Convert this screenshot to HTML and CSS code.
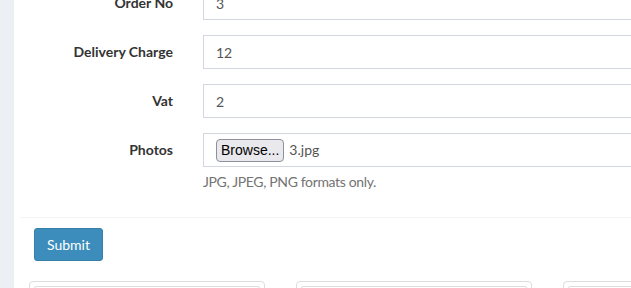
FILE: index.html
```
<!DOCTYPE html>
<html lang="en">
<head>
    <meta charset="UTF-8">
    <title>Edit Order</title>
    <link rel="stylesheet" href="styles.css">
</head>
<body>
    <div class="box">
        <form class="form-horizontal">
            <div class="box-body">
                <div class="form-group first">
                    <label class="control-label">Order No</label>
                    <input type="text" class="form-control" value="3">
                </div>
                <div class="form-group">
                    <label class="control-label">Delivery Charge</label>
                    <input type="text" class="form-control" value="12">
                </div>
                <div class="form-group">
                    <label class="control-label">Vat</label>
                    <input type="text" class="form-control" value="2">
                </div>
                <div class="form-group">
                    <label class="control-label">Photos</label>
                    <div class="field">
                        <div class="form-control file-control">
                            <span class="browse">Browse...</span>
                            <span class="file-name">3.jpg</span>
                        </div>
                        <p class="help-block">JPG, JPEG, PNG formats only.</p>
                    </div>
                </div>
            </div>

            <!-- footer -->
            <div class="box-footer">
                <button type="button" class="btn-primary">Submit</button>
            </div>
        </form>

        <div class="thumbs">
            <div class="thumbnail"><div class="thumb-inner"></div></div>
            <div class="thumbnail"><div class="thumb-inner"></div></div>
            <div class="thumbnail"><div class="thumb-inner"></div></div>
        </div>
    </div>
</body>
</html>
```

FILE: styles.css
```
body {
    margin: 0;
    padding: 0;
    background-color: #ecf0f5;
    color: #333;
    font-family: Lato, "Open Sans", sans-serif;
    font-size: 14px;
    line-height: 20px;
    overflow: hidden;
    height: 288px;
}
.box {
    margin-left: 14px;
    width: 700px;
    height: 320px;
    background-color: #fff;
}
.box-body {
    padding: 0 10px 10px 10px;
}
.form-group {
    display: flex;
    gap: 30px;
    margin-bottom: 15px;
}
.form-group.first {
    margin-top: -14px;
}
.control-label {
    width: 149px;
    flex-shrink: 0;
    text-align: right;
    font-weight: bold;
    padding-top: 7px;
}
.form-control {
    flex: 1;
    box-sizing: border-box;
    height: 34px;
    padding: 6px 12px;
    border: 1px solid #d2d6de;
    border-radius: 0;
    font-family: inherit;
    font-size: 14px;
    color: #555;
    background-color: #fff;
    outline: none;
}
.field {
    flex: 1;
}
.file-control {
    display: flex;
    align-items: center;
    gap: 5px;
    padding: 0 12px;
}
.browse {
    display: inline-block;
    box-sizing: border-box;
    height: 23px;
    padding: 0 4px;
    line-height: 21px;
    font-family: "Liberation Sans", Arial, sans-serif;
    font-size: 14px;
    color: #000;
    background-color: #e9e9ed;
    border: 1px solid #8f8f9d;
    border-radius: 4px;
}
.file-name {
    color: #555;
}
.help-block {
    margin: 5px 0 0 0;
    color: #737373;
    letter-spacing: -0.35px;
}
.box-footer {
    margin-left: 6px;
    border-top: 1px solid #f4f4f4;
    padding: 10px 14px;
}
.btn-primary {
    height: 33px;
    padding: 0 12px;
    font-family: inherit;
    font-size: 14px;
    color: #fff;
    background-color: #3c8dbc;
    border: 1px solid #367fa9;
    border-radius: 3px;
    cursor: pointer;
}
.thumbs {
    display: flex;
    gap: 31px;
    padding: 10px 0 0 15px;
}
.thumbnail {
    flex-shrink: 0;
    width: 236px;
    height: 60px;
    box-sizing: border-box;
    padding: 4px;
    border: 1px solid #ddd;
    border-radius: 4px;
}
.thumb-inner {
    height: 100%;
    border: 1px solid #ddd;
    border-radius: 2px;
}
```
